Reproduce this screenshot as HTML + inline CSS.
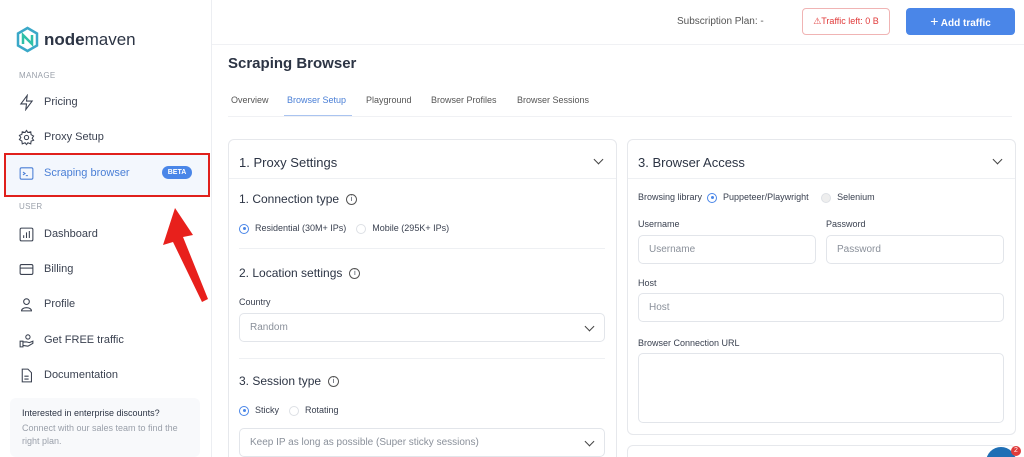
<!DOCTYPE html>
<html><head><meta charset="utf-8"><style>
*{box-sizing:border-box;margin:0;padding:0}
html,body{width:1024px;height:457px;overflow:hidden}
body{font-family:"Liberation Sans",sans-serif;background:#fff;position:relative;color:#333b4a}
.sb{position:absolute;left:0;top:0;width:212px;height:457px;border-right:1px solid #eceef2;background:#fff}
.abs{position:absolute}
.sec{position:absolute;left:19px;font-size:8px;color:#9aa0aa;letter-spacing:.3px}
.it{position:absolute;left:18px;font-size:11px;color:#3a4150;display:flex;align-items:center;height:16px}
.it svg{width:17px;height:17px;margin-right:9px;stroke:#3a4150;fill:none;stroke-width:1.5}
.top{position:absolute;left:212px;top:0;right:0;height:45px;border-bottom:1px solid #f0f1f4}
.card{position:absolute;background:#fff;border:1px solid #e6e8ec;border-radius:6px;overflow:hidden}
.h{font-size:13px;color:#2c3444}
.lbl{font-size:9px;color:#3a4150}
.inp{position:absolute;border:1px solid #e2e5ea;border-radius:5px;font-size:10px;color:#8a909a;padding-left:10px;display:flex;align-items:center}
.rad{display:inline-block;width:10px;height:10px;border-radius:50%;border:1px solid #dde0e5;vertical-align:middle;margin-right:6px;position:relative}
.rad.on{border-color:#4a86e8}
.rad.on::after{content:"";position:absolute;left:2.5px;top:2.5px;width:3px;height:3px;border-radius:50%;background:#4a86e8}
.chev{position:absolute;width:7px;height:7px;border-right:1.5px solid #444;border-bottom:1.5px solid #444;transform:rotate(45deg)}
.info{display:inline-block;width:11px;height:11px;border:1px solid #555;border-radius:50%;font-size:7px;text-align:center;line-height:9px;margin-left:7px;vertical-align:middle}
</style></head><body>
<div class="sb">
 <svg class="abs" style="left:15px;top:26px" width="25" height="27" viewBox="0 0 25 27"><path d="M12.5 2 L22 7.5 V19.5 L12.5 25 L3 19.5 V7.5 Z" fill="none" stroke="#3aa8c8" stroke-width="2.5"/><path d="M8 18 V9 L17 18 V9" fill="none" stroke="#2fc0a8" stroke-width="2.5"/></svg>
 <div class="abs" style="left:44px;top:30px;font-size:17px;color:#2c3444"><b>node</b>maven</div>
 <div class="sec" style="top:71px">MANAGE</div>
 <div class="it" style="top:94px"><svg viewBox="0 0 24 24"><path d="M13 2 L4 14 H12 L11 22 L20 10 H12 Z"/></svg>Pricing</div>
 <div class="it" style="top:129px"><svg viewBox="0 0 24 24"><circle cx="12" cy="12" r="3"/><path d="M12 2 L14 5 L18 4 L18.5 8 L22 10 L20 13 L22 16 L18.5 17 L18 21 L14 19.5 L12 22 L10 19.5 L6 21 L5.5 17 L2 15 L4 12 L2 9 L5.5 7.5 L6 4 L10 5 Z"/></svg>Proxy Setup</div>
 <div class="abs" style="left:4px;top:153px;width:206px;height:44px;border:2px solid #e0201c;background:#f3f7fd"></div>
 <div class="it" style="top:165px;color:#4a7fd6"><svg viewBox="0 0 24 24" style="stroke:#4a7fd6"><rect x="3" y="4" width="18" height="16" rx="2"/><path d="M7 10 L10 12 L7 14 M11 15 H14"/></svg>Scraping browser</div>
 <div class="abs" style="left:162px;top:166px;width:30px;height:13px;border-radius:7px;background:#4a86e8;color:#fff;font-size:7px;font-weight:bold;text-align:center;line-height:13px">BETA</div>
 <div class="sec" style="top:202px">USER</div>
 <div class="it" style="top:226px"><svg viewBox="0 0 24 24"><rect x="3" y="3" width="18" height="18" rx="2"/><path d="M8 17 V13 M12 17 V9 M16 17 V7"/></svg>Dashboard</div>
 <div class="it" style="top:261px"><svg viewBox="0 0 24 24"><rect x="3" y="5" width="18" height="14" rx="2"/><path d="M3 10 H21"/></svg>Billing</div>
 <div class="it" style="top:296px"><svg viewBox="0 0 24 24"><circle cx="12" cy="8" r="4"/><path d="M5 21 C5 15 19 15 19 21 Z"/></svg>Profile</div>
 <div class="it" style="top:332px"><svg viewBox="0 0 24 24"><circle cx="14" cy="7" r="3"/><path d="M3 13 H7 V21 H3 Z M7 14 H12 L16 15 L21 13 V16 L14 20 L7 19"/></svg>Get FREE traffic</div>
 <div class="it" style="top:367px"><svg viewBox="0 0 24 24"><path d="M6 3 H14 L19 8 V21 H6 Z M9 13 H15 M9 17 H15"/></svg>Documentation</div>
 <div class="abs" style="left:10px;top:398px;width:190px;height:59px;background:#f8f9fb;border-radius:6px"></div>
 <div class="abs" style="left:22px;top:408px;font-size:9px;color:#2c3444">Interested in enterprise discounts?</div>
 <div class="abs" style="left:22px;top:422px;font-size:9px;color:#9aa0aa;line-height:13px;width:175px">Connect with our sales team to find the right plan.</div>
</div>
<svg class="abs" style="left:160px;top:205px" width="55" height="100" viewBox="0 0 55 100"><polygon points="15,3 3,40 13,37 42,97 48,94 23,32 33,30" fill="#e8201c"/></svg>
<div class="top">
 <div class="abs" style="left:465px;top:16px;font-size:10px;color:#555">Subscription Plan: -</div>
 <div class="abs" style="left:590px;top:8px;width:88px;height:27px;border:1px solid #f0b4b4;border-radius:4px;color:#e03a3a;font-size:9px;line-height:25px;text-align:center">⚠Traffic left: 0 B</div>
 <div class="abs" style="left:694px;top:8px;width:109px;height:27px;background:#4a86e8;border-radius:4px;color:#fff;font-size:10px;font-weight:bold;line-height:27px;text-align:center"><span style="font-size:14px;font-weight:normal">+</span>  Add traffic</div>
</div>
<div class="abs" style="left:228px;top:55px;font-size:15px;color:#2c3444;font-weight:bold">Scraping Browser</div>
<div class="abs" style="left:231px;top:95px;font-size:9px;color:#555">Overview</div>
<div class="abs" style="left:287px;top:95px;font-size:9px;color:#4a7fd6">Browser Setup</div>
<div class="abs" style="left:284px;top:115px;width:68px;height:2px;background:#aac4f0"></div>
<div class="abs" style="left:366px;top:95px;font-size:9px;color:#555">Playground</div>
<div class="abs" style="left:431px;top:95px;font-size:9px;color:#555">Browser Profiles</div>
<div class="abs" style="left:517px;top:95px;font-size:9px;color:#555">Browser Sessions</div>
<div class="abs" style="left:228px;top:116px;width:784px;height:1px;background:#f0f1f4"></div>

<div class="card" style="left:228px;top:139px;width:389px;height:330px">
 <div class="abs h" style="left:10px;top:15px">1. Proxy Settings</div>
 <div class="chev" style="left:366px;top:16px"></div>
 <div class="abs" style="left:0;top:38px;width:387px;height:1px;background:#eef0f3"></div>
 <div class="abs h" style="left:10px;top:52px;font-size:12px">1. Connection type<span class="info">i</span></div>
 <div class="abs lbl" style="left:10px;top:83px"><span class="rad on"></span>Residential (30M+ IPs) &nbsp;&nbsp;&nbsp;<span class="rad"></span>Mobile (295K+ IPs)</div>
 <div class="abs" style="left:10px;top:108px;width:366px;height:1px;background:#eef0f3"></div>
 <div class="abs h" style="left:10px;top:126px;font-size:12px">2. Location settings<span class="info">i</span></div>
 <div class="abs lbl" style="left:10px;top:157px">Country</div>
 <div class="inp" style="left:10px;top:173px;width:366px;height:29px">Random</div>
 <div class="chev" style="left:357px;top:183px"></div>
 <div class="abs" style="left:10px;top:218px;width:366px;height:1px;background:#eef0f3"></div>
 <div class="abs h" style="left:10px;top:234px;font-size:12px">3. Session type<span class="info">i</span></div>
 <div class="abs lbl" style="left:10px;top:265px"><span class="rad on"></span>Sticky &nbsp;&nbsp;&nbsp;<span class="rad"></span>Rotating</div>
 <div class="inp" style="left:10px;top:288px;width:366px;height:29px">Keep IP as long as possible (Super sticky sessions)</div>
 <div class="chev" style="left:357px;top:298px"></div>
</div>

<div class="card" style="left:627px;top:139px;width:389px;height:296px">
 <div class="abs h" style="left:10px;top:15px">3. Browser Access</div>
 <div class="chev" style="left:366px;top:16px"></div>
 <div class="abs" style="left:0;top:38px;width:387px;height:1px;background:#eef0f3"></div>
 <div class="abs lbl" style="left:10px;top:52px">Browsing library &nbsp;<span class="rad on"></span>Puppeteer/Playwright &nbsp;&nbsp;&nbsp;&nbsp;<span class="rad" style="background:#eee"></span>Selenium</div>
 <div class="abs lbl" style="left:10px;top:79px">Username</div>
 <div class="abs lbl" style="left:198px;top:79px">Password</div>
 <div class="inp" style="left:10px;top:95px;width:178px;height:29px">Username</div>
 <div class="inp" style="left:198px;top:95px;width:178px;height:29px">Password</div>
 <div class="abs lbl" style="left:10px;top:138px">Host</div>
 <div class="inp" style="left:10px;top:153px;width:366px;height:29px">Host</div>
 <div class="abs lbl" style="left:10px;top:198px">Browser Connection URL</div>
 <div class="inp" style="left:10px;top:213px;width:366px;height:70px"></div>
</div>
<div class="card" style="left:627px;top:445px;width:389px;height:30px"></div>
<div class="abs" style="left:986px;top:447px;width:30px;height:30px;border-radius:50%;background:#1f6fb5"></div>
<div class="abs" style="left:1011px;top:446px;width:10px;height:10px;border-radius:50%;background:#e03a3a;color:#fff;font-size:7px;text-align:center;line-height:10px">2</div>
</body></html>
